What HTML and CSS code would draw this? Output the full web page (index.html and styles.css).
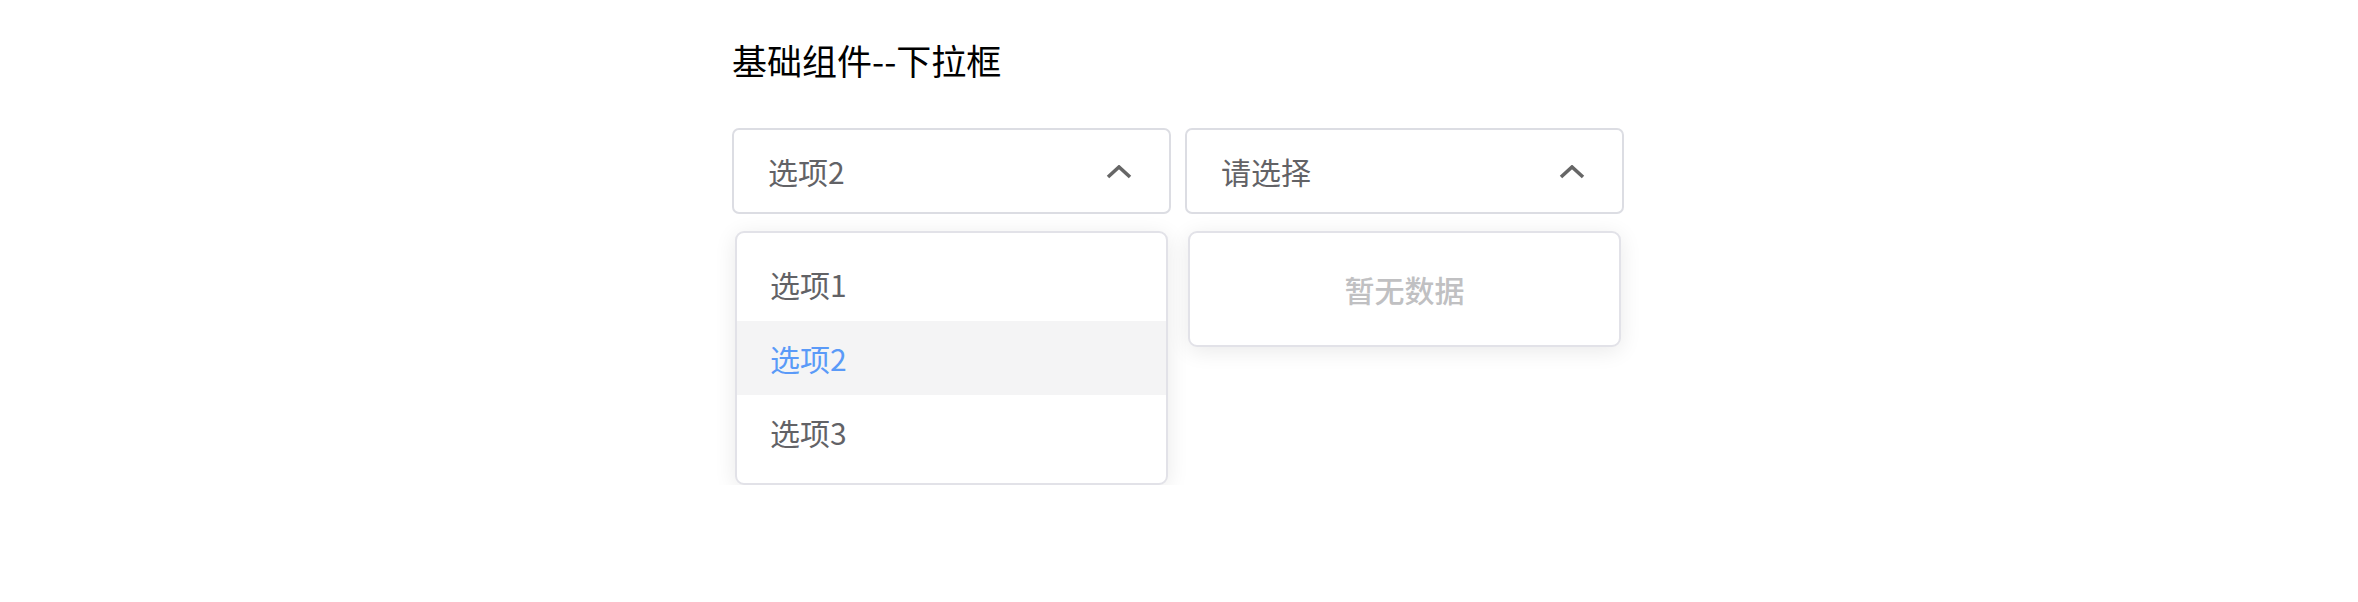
FILE: index.html
```html
<!DOCTYPE html>
<html lang="zh-CN">
<head>
<meta charset="utf-8">
<title>基础组件--下拉框</title>
<link rel="stylesheet" href="styles.css">
</head>
<body>
<div class="page">
  <h1 class="title">基础组件--下拉框</h1>
  <div class="row">
    <div class="select">
      <div class="trigger">
        <span class="value">选项2</span>
        <svg class="arrow" width="26" height="14" viewBox="0 0 26 14"><polyline points="2,12 13,2 24,12" fill="none" stroke="#666" stroke-width="3.6"/></svg>
      </div>
      <ul class="dropdown">
        <li class="option">选项1</li>
        <li class="option active">选项2</li>
        <li class="option">选项3</li>
      </ul>
    </div>
    <div class="select">
      <div class="trigger">
        <span class="value">请选择</span>
        <svg class="arrow" width="26" height="14" viewBox="0 0 26 14"><polyline points="2,12 13,2 24,12" fill="none" stroke="#666" stroke-width="3.6"/></svg>
      </div>
      <div class="dropdown empty">暂无数据</div>
    </div>
  </div>
</div>
</body>
</html>
```
FILE: styles.css
```css
* { box-sizing: border-box; }
html, body { margin: 0; padding: 0; background: #fff; }
body { font-family: "Noto Sans CJK SC", "Noto Sans", sans-serif; }
.page {
  width: 894px;
  margin: 0 auto;
  padding-top: 41px;
}
.title {
  margin: 0;
  font-size: 35px;
  line-height: 37px;
  font-weight: 400;
  color: #000;
}
.row {
  display: flex;
  gap: 14px;
  margin-top: 50px;
}
.select {
  width: 439px;
  display: flex;
  flex-direction: column;
}
.trigger {
  height: 86px;
  border: 2px solid #dcdde3;
  border-radius: 7px;
  display: flex;
  align-items: center;
  justify-content: space-between;
  padding: 0 37px 0 34px;
  background: #fff;
}
.value {
  font-size: 30px;
  color: #626266;
}
.arrow { display: block; margin-top: 2px; }
.dropdown {
  margin: 17px 3px 0;
  padding: 14px 0;
  list-style: none;
  background: #fff;
  border: 2px solid #e2e2e8;
  border-radius: 9px;
  box-shadow: 0 4px 22px rgba(0, 0, 0, 0.09);
}
.option {
  height: 74px;
  display: flex;
  align-items: center;
  padding-left: 33px;
  font-size: 30px;
  color: #626266;
}
.option.active {
  background: #f4f4f5;
  color: #5a9af8;
}
.empty {
  height: 116px;
  display: flex;
  align-items: center;
  justify-content: center;
  padding: 0;
  font-size: 30px;
  font-weight: 500;
  color: #c0c0c2;
}
```
